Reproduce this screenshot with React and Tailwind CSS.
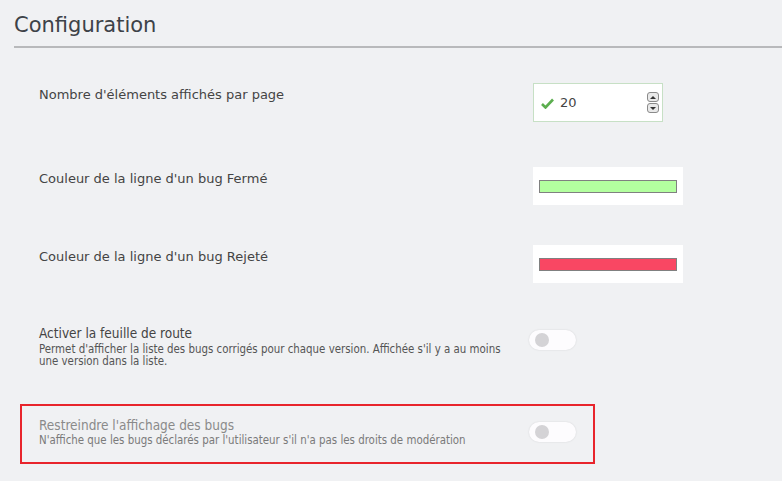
import { useState } from "react";

function Toggle({ on = false }) {
  return (
    <div className="w-[47px] h-[20px] rounded-full bg-[#fdfcfe] shadow-[0_0_2px_rgba(0,0,0,0.12)] flex items-center px-[6px]">
      <div className={"w-[14px] h-[14px] rounded-full " + (on ? "bg-[#5cb85c] ml-auto" : "bg-[#d4d3d6]")} />
    </div>
  );
}

function ColorBox({ color }) {
  return (
    <div className="w-[150px] h-[38px] bg-white flex items-center px-[6px]">
      <div className="w-full h-[13px] border border-[#808080]" style={{ backgroundColor: color }} />
    </div>
  );
}

const condensed = { fontFamily: '"DejaVu Sans Condensed", "DejaVu Sans", sans-serif' };

export default function App() {
  const [perPage] = useState(20);

  return (
    <div
      className="min-h-screen bg-[#f0f1f3] text-[#444] pt-[13px]"
      style={{ fontFamily: '"DejaVu Sans", sans-serif' }}
    >
      {/* Title */}
      <h1 className="pl-[14px] text-[21px] leading-[25px] text-[#3d4248]">Configuration</h1>
      <div className="ml-[14px] mt-[8px] h-[2px] bg-[#b8b9bb]" />

      {/* Nombre d'éléments */}
      <div className="flex items-start pl-[39px] mt-[35px]">
        <div className="w-[494px] pt-[4px] text-[13px] leading-[16px]">Nombre d'éléments affichés par page</div>
        <div className="w-[130px] h-[39px] bg-white border border-[#c7e0c5] flex items-center pl-[7px] pr-[3px]">
          <svg width="13" height="11" viewBox="0 0 13 11" className="mt-[1px]">
            <path d="M1 6 L4.5 9.5 L12 1.5" fill="none" stroke="#5cae4f" strokeWidth="2.6" />
          </svg>
          <span className="ml-[6px] text-[13px]">{perPage}</span>
          <div className="ml-auto flex flex-col gap-[1px]">
            <div className="w-[12px] h-[10px] rounded-[3px] border border-[#8a8a8a] bg-[#e9e9e9] flex items-center justify-center">
              <div className="w-0 h-0 border-l-[3px] border-r-[3px] border-b-[3px] border-l-transparent border-r-transparent border-b-[#333]" />
            </div>
            <div className="w-[12px] h-[10px] rounded-[3px] border border-[#8a8a8a] bg-[#e9e9e9] flex items-center justify-center">
              <div className="w-0 h-0 border-l-[3px] border-r-[3px] border-t-[3px] border-l-transparent border-r-transparent border-t-[#333]" />
            </div>
          </div>
        </div>
      </div>

      {/* Couleur Fermé */}
      <div className="flex items-start pl-[39px] mt-[45px]">
        <div className="w-[494px] pt-[4px] text-[13px] leading-[16px]">Couleur de la ligne d'un bug Fermé</div>
        <ColorBox color="#b3ff9f" />
      </div>

      {/* Couleur Rejeté */}
      <div className="flex items-start pl-[39px] mt-[40px]">
        <div className="w-[494px] pt-[4px] text-[13px] leading-[16px]">Couleur de la ligne d'un bug Rejeté</div>
        <ColorBox color="#f94763" />
      </div>

      {/* Feuille de route */}
      <div className="flex items-start pl-[39px] mt-[41px]">
        <div className="w-[490px]" style={condensed}>
          <div className="text-[13.5px] leading-[19px] text-[#444]">Activer la feuille de route</div>
          <div className="w-[470px] text-[11.4px] leading-[12px] text-[#555]">
            Permet d'afficher la liste des bugs corrigés pour chaque version. Affichée s'il y a au moins une version dans la liste.
          </div>
        </div>
        <div className="mt-[6px]">
          <Toggle />
        </div>
      </div>

      {/* Restreindre */}
      <div className="ml-[20px] mt-[37px] w-[575px] h-[60px] border-2 border-[#e8242c] flex items-start pl-[17px] pt-[10px]">
        <div className="w-[490px]" style={condensed}>
          <div className="text-[13.5px] leading-[18px] text-[#8a8a8a]">Restreindre l'affichage des bugs</div>
          <div className="text-[11.4px] leading-[12px] text-[#7a7a7a]">
            N'affiche que les bugs déclarés par l'utilisateur s'il n'a pas les droits de modération
          </div>
        </div>
        <div className="mt-[6px]">
          <Toggle />
        </div>
      </div>
    </div>
  );
}
